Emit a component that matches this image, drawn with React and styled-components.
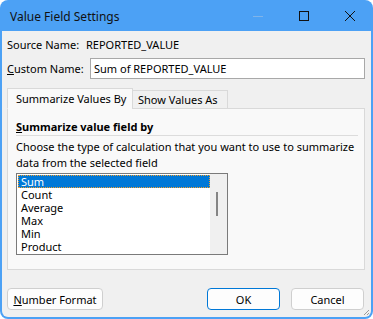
import React from 'react';
import styled, { createGlobalStyle } from 'styled-components';

const Global = createGlobalStyle`
  html, body { margin: 0; padding: 0; background: #ffffff; }
  body { font-family: "Noto Sans", "Liberation Sans", sans-serif; font-size: 11px; color: #000; }
`;

const Window = styled.div`
  width: 373px;
  height: 319px;
  box-sizing: border-box;
  background: #4ca1f5;
  border-radius: 8px;
  display: flex;
  flex-direction: column;
  overflow: hidden;
`;

const TitleBar = styled.div`
  height: 31px;
  display: flex;
  align-items: center;
  padding-left: 10px;
  font-size: 12px;
  color: #111;
`;

const TitleText = styled.div`
  flex: 1;
  padding-top: 1px;
`;

const WinButton = styled.div`
  width: 46px;
  height: 31px;
  display: flex;
  align-items: center;
  justify-content: center;
`;

const Body = styled.div`
  flex: 1;
  margin: 0 2px 2px 2px;
  background: #f0f0f0;
  border-radius: 0 0 6px 6px;
  padding: 5px 6px 0 5px;
  display: flex;
  flex-direction: column;
  position: relative;
`;

const Row = styled.div`
  display: flex;
  align-items: center;
  height: ${p => p.h || 16}px;
  margin-top: ${p => p.mt || 0}px;
`;

const Label = styled.div`
  width: ${p => p.w}px;
`;

const U = styled.span`
  text-decoration: underline;
`;

const Input = styled.div`
  flex: 1;
  height: 21px;
  box-sizing: border-box;
  border: 1px solid #a8a8a8;
  background: #fff;
  padding-left: 3px;
  display: flex;
  align-items: center;
`;

const Tabs = styled.div`
  display: flex;
  align-items: flex-end;
  margin-top: 9px;
  height: 21px;
  position: relative;
  z-index: 1;
`;

const Tab = styled.div`
  box-sizing: border-box;
  width: ${p => p.w}px;
  height: ${p => (p.active ? 21 : 19)}px;
  padding-left: ${p => (p.active ? 8 : 5)}px;
  display: flex;
  align-items: center;
  white-space: nowrap;
  overflow: hidden;
  background: ${p => (p.active ? '#f9f9f9' : '#f0f0f0')};
  border: 1px solid #d9d9d9;
  border-bottom: 1px solid ${p => (p.active ? '#f9f9f9' : '#d9d9d9')};
  margin-left: ${p => (p.active ? 0 : -1)}px;
`;

const Panel = styled.div`
  height: 162px;
  box-sizing: border-box;
  margin-top: -1px;
  background: #f9f9f9;
  border: 1px solid #d9d9d9;
  padding: 10px 6px 0 8px;
  display: flex;
  flex-direction: column;
`;

const Heading = styled.div`
  font-weight: bold;
  height: 15px;
  line-height: 15px;
  border-bottom: 1px solid #dcdcdc;
  padding-bottom: 1px;
`;

const Para = styled.div`
  margin-top: 3px;
  line-height: 16px;
`;

const ListBox = styled.div`
  margin-top: 2px;
  width: 212px;
  height: 82px;
  box-sizing: border-box;
  border: 1px solid #7a7a7a;
  background: #fff;
  display: flex;
`;

const Items = styled.div`
  flex: 1;
  padding: 1px 0 0 1px;
`;

const Item = styled.div`
  height: 13px;
  line-height: 13px;
  padding-left: 3px;
  box-sizing: border-box;
  background: ${p => (p.sel ? '#0078d7' : 'transparent')};
  color: ${p => (p.sel ? '#fff' : '#000')};
  outline: ${p => (p.sel ? '1px dotted #f0a030' : 'none')};
  outline-offset: -1px;
`;

const ScrollTrack = styled.div`
  width: 17px;
  background: #f0f0f0;
  position: relative;
`;

const Thumb = styled.div`
  position: absolute;
  left: 6px;
  top: 18px;
  width: 2px;
  height: 24px;
  background: #858585;
`;

const Footer = styled.div`
  display: flex;
  margin-top: 18px;
  gap: 11px;
`;

const Button = styled.div`
  height: 22px;
  width: ${p => p.w}px;
  box-sizing: border-box;
  border: 1px solid ${p => (p.primary ? '#0078d7' : '#cfcfcf')};
  border-radius: 4px;
  background: #fdfdfd;
  display: flex;
  align-items: center;
  justify-content: center;
  margin-left: ${p => p.ml || 0}px;
`;

const Grip = styled.svg`
  position: absolute;
  right: 1px;
  bottom: 1px;
`;

export default function App() {
  return (
    <>
      <Global />
      <Window>
        <TitleBar>
          <TitleText>Value Field Settings</TitleText>
          <WinButton>
            <svg width="10" height="10" viewBox="0 0 10 10"><line x1="0" y1="5.5" x2="10" y2="5.5" stroke="#7fb4ea" strokeWidth="1" /></svg>
          </WinButton>
          <WinButton>
            <svg width="10" height="10" viewBox="0 0 10 10"><rect x="0.5" y="0.5" width="9" height="9" fill="none" stroke="#111" strokeWidth="1" /></svg>
          </WinButton>
          <WinButton>
            <svg width="10" height="10" viewBox="0 0 10 10"><path d="M0 0 L10 10 M10 0 L0 10" stroke="#111" strokeWidth="1" /></svg>
          </WinButton>
        </TitleBar>
        <Body>
          <Row>
            <Label w={79}>Source Name:</Label>
            <span>REPORTED_VALUE</span>
          </Row>
          <Row h={21} mt={6}>
            <Label w={83}><U>C</U>ustom Name:</Label>
            <Input>Sum of REPORTED_VALUE</Input>
          </Row>
          <Tabs>
            <Tab active w={126}>Summarize Values By</Tab>
            <Tab w={96}>Show Values As</Tab>
          </Tabs>
          <Panel>
            <Heading><U>S</U>ummarize value field by</Heading>
            <Para>Choose the type of calculation that you want to use to summarize data from the selected field</Para>
            <ListBox>
              <Items>
                <Item sel>Sum</Item>
                <Item>Count</Item>
                <Item>Average</Item>
                <Item>Max</Item>
                <Item>Min</Item>
                <Item>Product</Item>
              </Items>
              <ScrollTrack><Thumb /></ScrollTrack>
            </ListBox>
          </Panel>
          <Footer>
            <Button w={96}><U>N</U>umber Format</Button>
            <Button w={73} ml={93} primary>OK</Button>
            <Button w={73}>Cancel</Button>
          </Footer>
          <Grip width="8" height="8" viewBox="0 0 8 8">
            <path d="M7 2 L2 7 M7 5 L5 7" stroke="#9a9a9a" strokeWidth="1" />
          </Grip>
        </Body>
      </Window>
    </>
  );
}
